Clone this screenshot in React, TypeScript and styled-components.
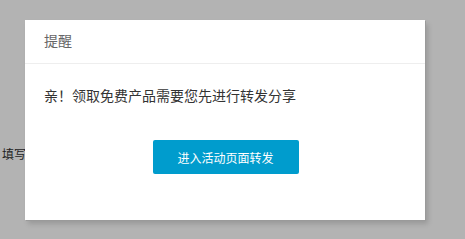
import React from 'react'
import styled, { createGlobalStyle } from 'styled-components'

const GlobalStyle = createGlobalStyle`
    html, body {
        margin: 0;
        padding: 0;
        background: #b3b3b3;
        font-family: "Microsoft YaHei", "Noto Sans CJK SC", sans-serif;
    }
`

const Page = styled.div`
    position: relative;
    width: 465px;
    height: 239px;
    overflow: hidden;
    padding-top: 140px;
    padding-left: 2px;
    box-sizing: border-box;
`

const PageLabel = styled.span`
    font-size: 12px;
    line-height: 18px;
    color: #1e1e1e;
`

const Dialog = styled.div`
    position: absolute;
    left: 25px;
    top: 20px;
    width: 400px;
    height: 200px;
    background: #fff;
    display: flex;
    flex-direction: column;
    box-shadow: 1px 1px 0 #9a9a9a, 3px 4px 5px rgba(0, 0, 0, 0.15);
`

const Header = styled.div`
    height: 43px;
    line-height: 41px;
    padding: 0 19px;
    font-size: 14px;
    color: #666;
    border-bottom: 1px solid #eee;
`

const Body = styled.div`
    padding: 21px 19px 0;
    font-size: 14px;
    line-height: 20px;
    color: #333;
`

const Footer = styled.div`
    display: flex;
    justify-content: center;
    margin-top: 35px;
    padding-left: 1px;
`

const Button = styled.button`
    width: 146px;
    height: 34px;
    border: none;
    border-radius: 2px;
    background: #009ccd;
    color: #fff;
    font-family: inherit;
    font-size: 12px;
    cursor: pointer;
`

export default function App() {
    return (
        <>
            <GlobalStyle />
            <Page>
                <PageLabel>填写</PageLabel>
                <Dialog>
                    <Header>提醒</Header>
                    <Body>亲！领取免费产品需要您先进行转发分享</Body>
                    <Footer>
                        <Button>进入活动页面转发</Button>
                    </Footer>
                </Dialog>
            </Page>
        </>
    )
}
